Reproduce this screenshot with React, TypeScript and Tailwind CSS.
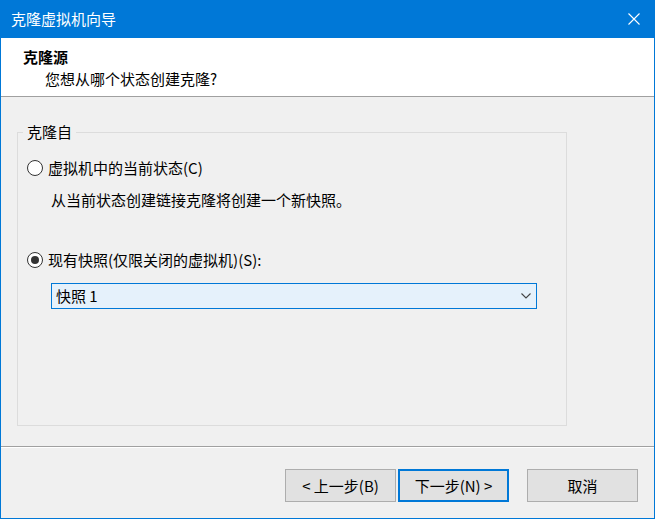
import React from "react";

const Radio = ({ checked }: { checked?: boolean }) => (
  <span className="flex h-[16px] w-[16px] shrink-0 items-center justify-center rounded-full border border-[#333333] bg-white">
    {checked && <span className="h-[8px] w-[8px] rounded-full bg-[#333333]" />}
  </span>
);

const Button = ({ label, primary, className = "" }: { label: string; primary?: boolean; className?: string }) => (
  <button
    className={`flex h-[33px] w-[111px] items-center justify-center bg-[#e1e1e1] text-[15px] text-black ${
      primary ? "border-2 border-[#0078d7]" : "border border-[#adadad]"
    } ${className}`}
  >
    {label}
  </button>
);

export default function App() {
  return (
    <div className="flex h-[519px] w-[655px] flex-col border-x border-b border-[#0078d7] bg-[#f0f0f0] font-['Noto_Sans_CJK_SC','Noto_Sans',sans-serif] text-[15px] leading-[20px] text-black">
      {/* title bar */}
      <div className="flex h-[38px] shrink-0 items-center justify-between bg-[#0078d7] pl-[10px] pr-[14px] text-white">
        <span>克隆虚拟机向导</span>
        <svg width="12" height="12" viewBox="0 0 12 12" fill="none" stroke="white" strokeWidth="1.1">
          <path d="M0.5 0.5 L11.5 11.5 M11.5 0.5 L0.5 11.5" />
        </svg>
      </div>

      {/* header */}
      <div className="h-[58px] shrink-0 bg-white pl-[22px] pt-[9px]">
        <div className="font-bold">克隆源</div>
        <div className="mt-[2px] pl-[22px]">您想从哪个状态创建克隆?</div>
      </div>
      <div className="h-px shrink-0 bg-[#a0a0a0]" />

      {/* content */}
      <div className="h-[349px] shrink-0">
        <div className="relative ml-[16px] mt-[35px] h-[294px] w-[550px] border border-[#dcdcdc]">
          <span className="absolute -top-[11px] left-[5px] bg-[#f0f0f0] px-[4px]">克隆自</span>

          <div className="mt-[25px] flex h-[20px] items-center gap-[5px] pl-[9px]">
            <Radio />
            <span>虚拟机中的当前状态(C)</span>
          </div>
          <div className="mt-[12px] h-[20px] pl-[33px]">从当前状态创建链接克隆将创建一个新快照。</div>

          <div className="mt-[40px] flex h-[20px] items-center gap-[5px] pl-[9px]">
            <Radio checked />
            <span>现有快照(仅限关闭的虚拟机)(S):</span>
          </div>
          <div className="ml-[33px] mt-[13px] flex h-[26px] w-[486px] items-center justify-between border border-[#0078d7] bg-[#e5f1fb] pl-[4px] pr-[5px]">
            <span>快照 1</span>
            <svg width="10" height="6" viewBox="0 0 10 6" fill="none" stroke="#444444" strokeWidth="1.1">
              <path d="M0.5 0.5 L5 5 L9.5 0.5" />
            </svg>
          </div>
        </div>
      </div>

      <div className="h-px shrink-0 bg-[#a0a0a0]" />
      <div className="h-px shrink-0 bg-white" />

      {/* footer */}
      <div className="flex flex-1 items-start justify-end pr-[16px] pt-[21px]">
        <Button label="< 上一步(B)" />
        <Button label="下一步(N) >" primary className="ml-[2px]" />
        <Button label="取消" className="ml-[18px]" />
      </div>
    </div>
  );
}
